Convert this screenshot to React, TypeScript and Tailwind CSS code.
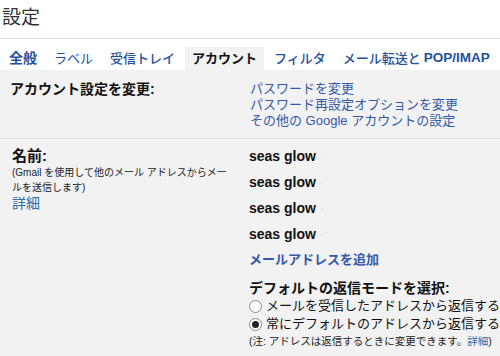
import React from "react";

const jp = "font-['Liberation_Sans','Noto_Sans_CJK_JP',sans-serif]";

const Radio: React.FC<{ checked?: boolean; label: string }> = ({ checked, label }) => (
    <label className="flex h-[18px] items-center gap-[4px] whitespace-nowrap">
        <span className="flex size-[13px] items-center justify-center rounded-full border border-[#8a8a8a] bg-white">
            {checked && <span className="size-[7px] rounded-full bg-[#222]" />}
        </span>
        <span className="text-[13px] text-[#111]">{label}</span>
    </label>
);

const App: React.FC = () => {
    const names = ["seas glow", "seas glow", "seas glow", "seas glow"];

    return (
        <div className={`${jp} h-[356px] w-[500px] overflow-hidden bg-white`}>
            {/* header */}
            <div className="h-[39px] border-b border-[#e2e2e2] pl-[2px] pt-[5px] text-[19px] leading-[26px] text-[#333]">
                設定
            </div>

            {/* tabs */}
            <div className="flex h-[31px] items-end gap-[3px] whitespace-nowrap pl-[2px] text-[13px] text-[#24519c]">
                <div className="flex h-[23px] items-center px-[7px] text-[14px] font-bold">全般</div>
                <div className="flex h-[23px] items-center px-[7px]">ラベル</div>
                <div className="flex h-[23px] items-center px-[7px] font-medium">受信トレイ</div>
                <div className="flex h-[23px] items-center bg-[#f2f2f2] px-[7px] font-bold text-[#111]">
                    アカウント
                </div>
                <div className="flex h-[23px] items-center px-[7px] font-medium">フィルタ</div>
                <div className="flex h-[23px] items-center pl-[7px] font-medium">
                    メール転送と<span className="ml-[3px] text-[13.5px] font-bold">POP/IMAP</span>
                </div>
            </div>

            {/* content */}
            <div className="h-full bg-[#f2f2f2]">
                <div className="flex border-b border-[#e2e2e2] pb-[9px] pt-[11px]">
                    <div className="w-[250px] pl-[10px] text-[14px] font-bold leading-[16px] text-[#111]">
                        アカウント設定を変更:
                    </div>
                    <div className="flex flex-col text-[13px] leading-[16px] text-[#3558a8]">
                        <a href="#">パスワードを変更</a>
                        <a href="#">パスワード再設定オプションを変更</a>
                        <a href="#">その他の Google アカウントの設定</a>
                    </div>
                </div>

                <div className="flex">
                    <div className="w-[250px] pl-[12px] pt-[8px]">
                        <div className="text-[15px] font-bold leading-[18px] text-[#111]">名前:</div>
                        <div className="whitespace-nowrap text-[10px] leading-[15px] text-[#222]">
                            (Gmail を使用して他のメール アドレスからメー
                            <br />
                            ルを送信します)
                        </div>
                        <a href="#" className="block text-[14px] leading-[16px] text-[#2a6cb0]">
                            詳細
                        </a>
                    </div>

                    <div className="flex flex-col pt-[4px]">
                        {names.map((n, i) => (
                            <div key={i} className="flex h-[26px] items-center gap-[4px]">
                                <span className="text-[14px] font-bold text-[#111]">{n}</span>
                                <span className="text-[10px] text-[#c8c8c8]">·</span>
                            </div>
                        ))}
                        <a href="#" className="flex h-[26px] items-center text-[13px] font-bold text-[#3558a8]">
                            メールアドレスを追加
                        </a>
                        <div className="mt-[6px] flex h-[18px] items-center whitespace-nowrap text-[14px] font-bold text-[#111]">
                            デフォルトの返信モードを選択:
                        </div>
                        <Radio label="メールを受信したアドレスから返信する" />
                        <Radio checked label="常にデフォルトのアドレスから返信する" />
                        <div className="flex h-[18px] items-center whitespace-nowrap text-[10.5px] text-[#222]">
                            (注: アドレスは返信するときに変更できます。
                            <a href="#" className="text-[#2a6cb0]">
                                詳細
                            </a>
                            )
                        </div>
                    </div>
                </div>
            </div>
        </div>
    );
};

export default App;
